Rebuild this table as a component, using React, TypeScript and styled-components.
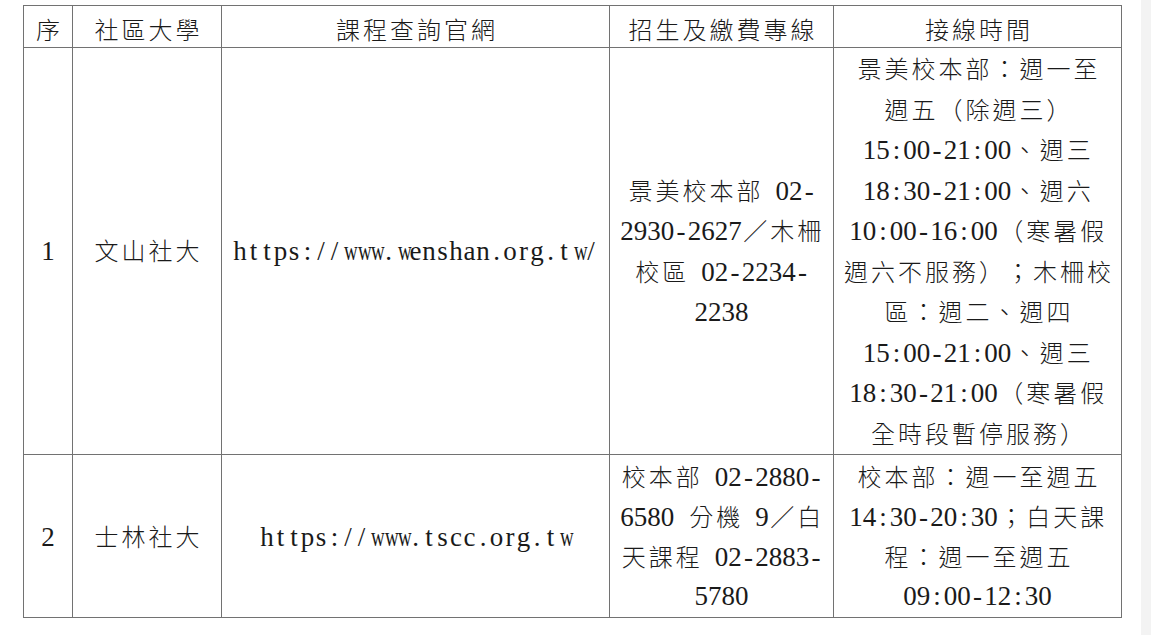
import React from "react";
import styled, { createGlobalStyle } from "styled-components";

const Global = createGlobalStyle`
  html, body { margin: 0; padding: 0; background: #ffffff; }
  body { font-family: "Liberation Serif", "Noto Sans CJK TC", serif; color: #1a1a1a; }
`;

const Page = styled.div`
  display: flex;
  width: 1151px;
  height: 635px;
  overflow: hidden;
`;

const Main = styled.div`
  flex: 1;
  padding: 5px 0 0 23px;
  background: #ffffff;
`;

const Gutter = styled.div`
  width: 10px;
  background: #f3f3f3;
`;

const Table = styled.table`
  border-collapse: collapse;
  table-layout: fixed;
  width: 1098px;
`;

const HeadCell = styled.th`
  border: 1px solid #727272;
  padding: 0;
  font-weight: normal;
  text-align: center;
  vertical-align: middle;
  height: 41px;
`;

const Cell = styled.td<{ $pad: number }>`
  border: 1px solid #727272;
  padding: ${(p) => p.$pad}px 0 0 0;
  text-align: center;
  vertical-align: middle;
`;

const Line = styled.div<{ $lh: number; $top?: number }>`
  font-family: "Liberation Serif", serif;
  font-size: 27px;
  white-space: nowrap;
  height: ${(p) => p.$lh}px;
  line-height: ${(p) => p.$lh}px;
  padding-top: ${(p) => p.$top || 0}px;
`;

const Ch = styled.span<{ $wide: boolean }>`
  display: inline-block;
  width: ${(p) => (p.$wide ? "27px" : "13.5px")};
  text-align: center;
  line-height: 1;
  font-family: ${(p) =>
    p.$wide ? '"Noto Sans CJK TC", sans-serif' : '"Liberation Serif", serif'};
  font-size: ${(p) => (p.$wide ? "24px" : "27px")};
  font-weight: ${(p) => (p.$wide ? 300 : 400)};
`;

const Squeeze = styled.span`
  display: inline-block;
  transform: scaleX(0.7);
`;

const WIDE = /[\u2E80-\u9FFF\uFF00-\uFFEF\u3000-\u303F]/;
const BROAD = /[wmWM]/;

function Text({ value }: { value: string }) {
  return (
    <>
      {Array.from(value).map((c, i) => (
        <Ch key={i} $wide={WIDE.test(c)}>
          {c === " " ? "\u00a0" : BROAD.test(c) ? <Squeeze>{c}</Squeeze> : c}
        </Ch>
      ))}
    </>
  );
}

const widths = [49, 149, 388, 224, 288];
const headers = ["序", "社區大學", "課程查詢官網", "招生及繳費專線", "接線時間"];

type Row = { pad: number; lh: number; cells: string[][] };

const rows: Row[] = [
  {
    pad: 1,
    lh: 40.5,
    cells: [
      ["1"],
      ["文山社大"],
      ["https://www.wenshan.org.tw/"],
      ["景美校本部 02-", "2930-2627／木柵", "校區 02-2234-", "2238"],
      [
        "景美校本部：週一至",
        "週五（除週三）",
        "15:00-21:00、週三",
        "18:30-21:00、週六",
        "10:00-16:00（寒暑假",
        "週六不服務）；木柵校",
        "區：週二、週四",
        "15:00-21:00、週三",
        "18:30-21:00（寒暑假",
        "全時段暫停服務）",
      ],
    ],
  },
  {
    pad: 3,
    lh: 39.8,
    cells: [
      ["2"],
      ["士林社大"],
      ["https://www.tscc.org.tw"],
      ["校本部 02-2880-", "6580 分機 9／白", "天課程 02-2883-", "5780"],
      ["校本部：週一至週五", "14:30-20:30；白天課", "程：週一至週五", "09:00-12:30"],
    ],
  },
];

export default function App() {
  return (
    <>
      <Global />
      <Page>
        <Main>
          <Table>
            <colgroup>
              {widths.map((w, i) => (
                <col key={i} style={{ width: w }} />
              ))}
            </colgroup>
            <thead>
              <tr>
                {headers.map((h) => (
                  <HeadCell key={h}>
                    <Line $lh={33} $top={8}>
                      <Text value={h} />
                    </Line>
                  </HeadCell>
                ))}
              </tr>
            </thead>
            <tbody>
              {rows.map((row, r) => (
                <tr key={r}>
                  {row.cells.map((lines, c) => (
                    <Cell key={c} $pad={row.pad}>
                      {lines.map((l, k) => (
                        <Line key={k} $lh={row.lh}>
                          <Text value={l} />
                        </Line>
                      ))}
                    </Cell>
                  ))}
                </tr>
              ))}
            </tbody>
          </Table>
        </Main>
        <Gutter />
      </Page>
    </>
  );
}
